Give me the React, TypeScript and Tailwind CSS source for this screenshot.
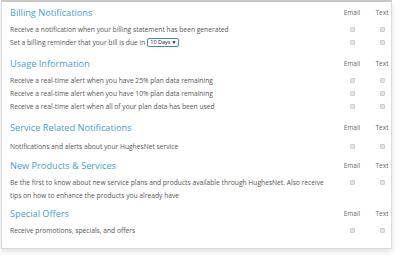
import React from "react";

const Box = () => (
  <span className="block w-[5px] h-[5px] rounded-[1px] bg-[#e4e4e4] border border-[#cfcfcf]" />
);

const Checks = () => (
  <div className="flex shrink-0 w-[51px] gap-[9px]">
    <div className="w-[24px] flex justify-center"><Box /></div>
    <div className="w-[18px] flex justify-center"><Box /></div>
  </div>
);

const Heading = ({ title }: { title: string }) => (
  <div className="flex items-center h-[16px]">
    <div className="flex-1 text-[9.2px] text-[#3fa0d6] leading-none">{title}</div>
    <div className="flex shrink-0 w-[51px] gap-[9px] text-[6.5px] text-[#666] leading-none">
      <div className="w-[24px] text-center">Email</div>
      <div className="w-[18px] text-center">Text</div>
    </div>
  </div>
);

const Row = ({ children }: { children: React.ReactNode }) => (
  <div className="flex items-center h-[13px]">
    <div className="flex-1 text-[6.7px] text-[#555] leading-[13px] whitespace-nowrap">{children}</div>
    <Checks />
  </div>
);

export default function App() {
  return (
    <div className="w-[400px] h-[260px] bg-white" style={{ fontFamily: '"Open Sans", sans-serif' }}>
      <div className="ml-[1px] w-[391px] border border-[#dcdcdc] border-t-2 border-t-[#c8c8c8] bg-white pl-[8px] pr-0 pt-[3px] pb-[11px] shadow-[0_3px_5px_rgba(0,0,0,0.12)]">
        <Heading title="Billing Notifications" />
        <div className="mt-[2px]">
          <Row>Receive a notification when your billing statement has been generated</Row>
          <Row>
            <span className="inline-flex items-center">
              Set a billing reminder that your bill is due in
              <span className="ml-[2px] inline-flex items-center justify-between w-[32px] h-[9px] border border-[#3a8ad0] rounded-[2px] px-[2px] text-[5.5px] text-[#111] leading-none whitespace-nowrap">
                <span>10 Days</span>
                <span className="text-[5px]">▼</span>
              </span>
            </span>
          </Row>
        </div>

        <div className="mt-[7px]">
          <Heading title="Usage Information" />
          <div className="mt-[2px]">
            <Row>Receive a real-time alert when you have 25% plan data remaining</Row>
            <Row>Receive a real-time alert when you have 10% plan data remaining</Row>
            <Row>Receive a real-time alert when all of your plan data has been used</Row>
          </div>
        </div>

        <div className="mt-[7px]">
          <Heading title="Service Related Notifications" />
          <div className="mt-[4px]">
            <Row>Notifications and alerts about your HughesNet service</Row>
          </div>
        </div>

        <div className="mt-[5px]">
          <Heading title="New Products & Services" />
          <div className="mt-[2px] flex items-start">
            <div className="w-[322px] text-[6.7px] text-[#555] leading-[13px]">
              Be the first to know about new service plans and products available through HughesNet. Also receive tips on how to enhance the products you already have
            </div>
            <div className="flex-1" />
            <div className="h-[13px] flex items-center"><Checks /></div>
          </div>
        </div>

        <div className="mt-[4px]">
          <Heading title="Special Offers" />
          <div className="mt-[2px]">
            <Row>Receive promotions, specials, and offers</Row>
          </div>
        </div>
      </div>
    </div>
  );
}
